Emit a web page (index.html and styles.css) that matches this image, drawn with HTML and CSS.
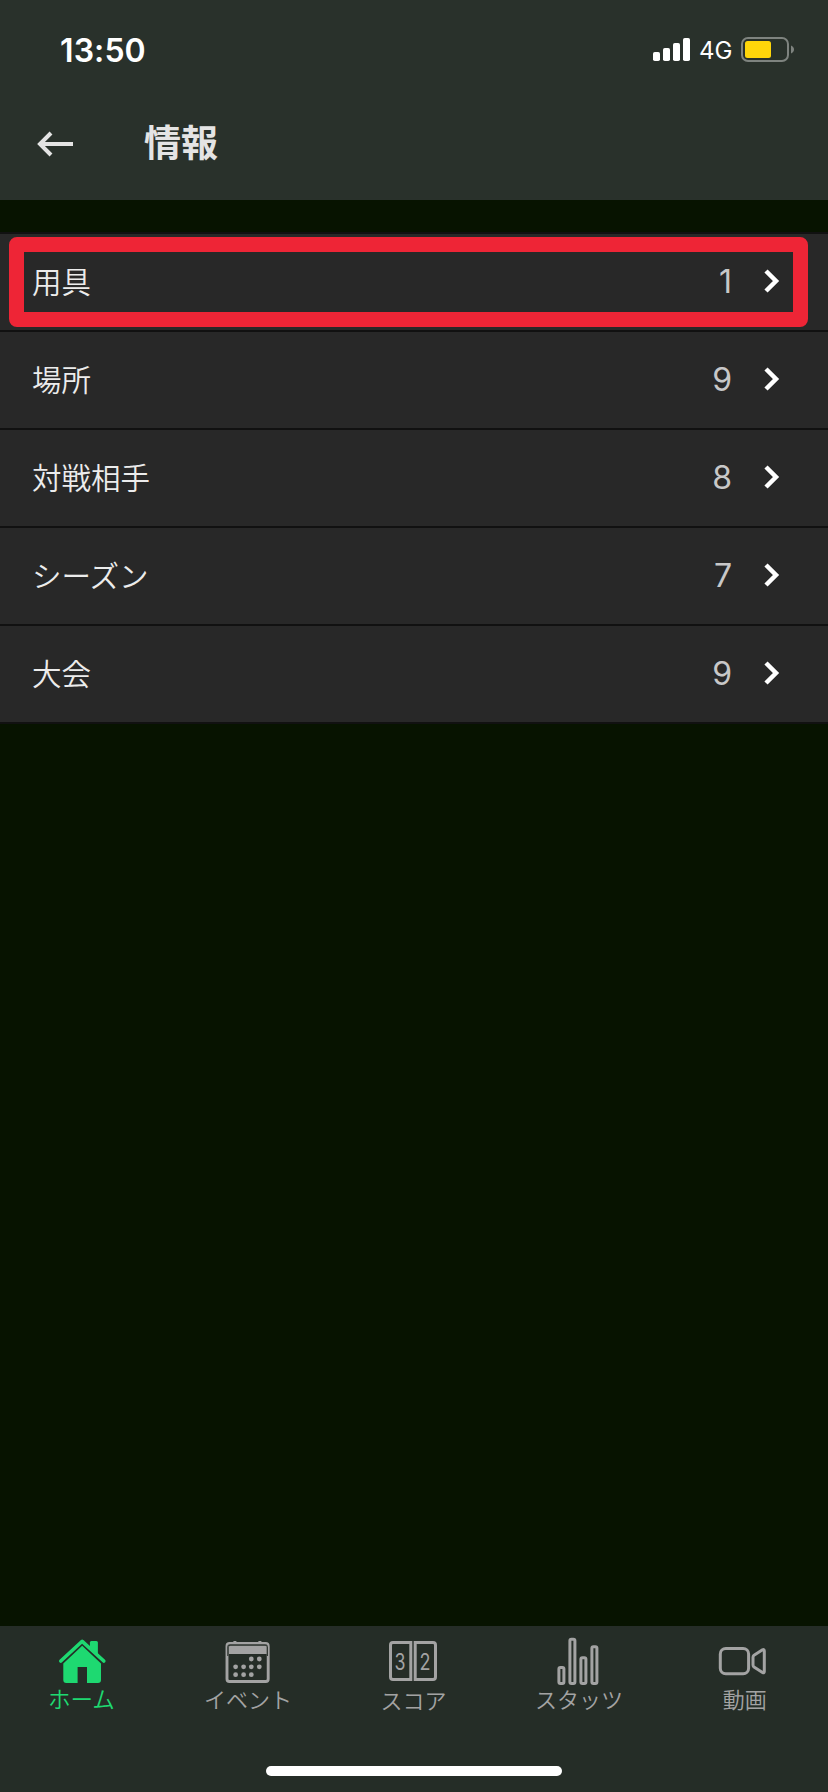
FILE: index.html
```
<!DOCTYPE html>
<html lang="ja">
<head>
    <meta charset="UTF-8">
    <meta name="viewport" content="width=device-width, initial-scale=1.0">
    <title>情報</title>
    <link rel="stylesheet" href="styles.css">
</head>
<body>

    <header>
        <div class="status-bar">
            <span class="time">13:50</span>
            <div class="status-icons">
                <svg class="signal" width="38" height="24" viewBox="0 0 38 24" fill="#fff">
                    <rect x="0" y="14" width="7" height="9" rx="1.8"/>
                    <rect x="10" y="10" width="7" height="13" rx="1.8"/>
                    <rect x="20" y="5" width="7" height="18" rx="1.8"/>
                    <rect x="30" y="0" width="7" height="23" rx="1.8"/>
                </svg>
                <span class="network">4G</span>
                <svg class="battery" width="54" height="26" viewBox="0 0 54 26">
                    <rect x="1" y="1" width="46" height="23" rx="6" fill="none" stroke="#7e837f" stroke-width="2"/>
                    <rect x="4" y="4" width="26" height="17" rx="2.5" fill="#ffd60a"/>
                    <path d="M50 8.5c2 .8 3 2.300 3 4s-1 3.200-3 4z" fill="#7e837f"/>
                </svg>
            </div>
        </div>
        <div class="title-bar">
            <a href="#" class="back">
                <svg width="38" height="26" viewBox="0 0 38 26" fill="none" stroke="#e4e4e4" stroke-width="4">
                    <path d="M37 13H4M15 2L4 13L15 24"/>
                </svg>
            </a>
            <h1>情報</h1>
        </div>
    </header>

    <main>
        <ul class="list">
            <li class="selected">
                <span class="name">用具</span><span class="count">1</span>
                <svg class="arrow" width="16" height="24" viewBox="0 0 16 24"><path d="M2 2L12 12L2 22"/></svg>
            </li>
            <li>
                <span class="name">場所</span><span class="count">9</span>
                <svg class="arrow" width="16" height="24" viewBox="0 0 16 24"><path d="M2 2L12 12L2 22"/></svg>
            </li>
            <li>
                <span class="name">対戦相手</span><span class="count">8</span>
                <svg class="arrow" width="16" height="24" viewBox="0 0 16 24"><path d="M2 2L12 12L2 22"/></svg>
            </li>
            <li>
                <span class="name">シーズン</span><span class="count">7</span>
                <svg class="arrow" width="16" height="24" viewBox="0 0 16 24"><path d="M2 2L12 12L2 22"/></svg>
            </li>
            <li>
                <span class="name">大会</span><span class="count">9</span>
                <svg class="arrow" width="16" height="24" viewBox="0 0 16 24"><path d="M2 2L12 12L2 22"/></svg>
            </li>
        </ul>
    </main>

    <footer>
        <nav>
            <a href="#" class="tab active">
                <svg width="56" height="56" viewBox="0 0 56 56" fill="currentColor">
                    <path d="M34.900 16.500V10.500q0-1.500 1.500-1.500h5q1.500 0 1.500 1.500V23.800z"/>
                    <path d="M5.800 29L27.200 9.300L48.800 29" fill="none" stroke="currentColor" stroke-width="3.600" stroke-linecap="round" stroke-linejoin="round"/>
                    <path d="M27.200 13.700L46 31.500V48q0 3-3 3H32V35H22.600V51H11.300q-3 0-3-3V31.500z"/>
                </svg>
                <span>ホーム</span>
            </a>
            <a href="#" class="tab">
                <svg width="56" height="56" viewBox="0 0 56 56" fill="currentColor">
                    <rect x="7" y="11.500" width="41.200" height="38" rx="2.500" fill="none" stroke="currentColor" stroke-width="2.900"/>
                    <rect x="13.400" y="9" width="3" height="3"/>
                    <rect x="38.400" y="9" width="3" height="3"/>
                    <path d="M7.800 24V14.500q0-1.700 1.700-1.700h36.200q1.700 0 1.700 1.700V24" fill="none" stroke="#252d27" stroke-width="1"/>
                    <path d="M9 22V15q0-1.300 1.300-1.300h35q1.300 0 1.300 1.300v7z"/>
                    <circle cx="31.300" cy="27" r="2.400"/><circle cx="39.300" cy="27" r="2.400"/>
                    <circle cx="15.600" cy="34.800" r="2.400"/><circle cx="23.600" cy="34.800" r="2.400"/><circle cx="31.300" cy="34.800" r="2.400"/><circle cx="39.300" cy="34.800" r="2.400"/>
                    <circle cx="15.600" cy="42.700" r="2.400"/><circle cx="23.600" cy="42.700" r="2.400"/><circle cx="31.300" cy="42.700" r="2.400"/>
                </svg>
                <span>イベント</span>
            </a>
            <a href="#" class="tab score">
                <svg width="56" height="56" viewBox="0 0 56 56" fill="none" stroke="currentColor" stroke-width="3">
                    <path d="M24.800 10.500H7q-2.500 0-2.500 2.500V45q0 2.500 2.500 2.500H24.800z"/>
                    <path d="M29.200 10.500H47q2.500 0 2.500 2.500V45q0 2.500-2.500 2.500H29.200z"/>
                    <text x="14" y="37.500" class="digit" textLength="11" lengthAdjust="spacingAndGlyphs">3</text>
                    <text x="39" y="37.500" class="digit" textLength="11" lengthAdjust="spacingAndGlyphs">2</text>
                </svg>
                <span>スコア</span>
            </a>
            <a href="#" class="tab">
                <svg width="56" height="56" viewBox="0 0 56 56" fill="none" stroke="currentColor" stroke-width="3">
                    <rect x="6.900" y="35.500" width="5" height="16" rx="1.500"/>
                    <rect x="17.900" y="7.200" width="5" height="44.300" rx="1.500"/>
                    <rect x="28.900" y="25.800" width="5" height="25.700" rx="1.500"/>
                    <rect x="39.900" y="14.800" width="5" height="36.700" rx="1.500"/>
                </svg>
                <span>スタッツ</span>
            </a>
            <a href="#" class="tab">
                <svg width="56" height="56" viewBox="0 0 56 56" fill="none" stroke="currentColor" stroke-width="3" stroke-linejoin="round">
                    <rect x="3.300" y="16.500" width="28.300" height="25.300" rx="5.500"/>
                    <path d="M36 25.200Q36 24 37 23.200L45.500 17.800Q47.300 17 47.300 19V39.500Q47.300 41.500 45.500 40.500L37 35Q36 34.200 36 33z"/>
                </svg>
                <span>動画</span>
            </a>
        </nav>
        <div class="home-indicator"></div>
    </footer>

</body>
</html>
```
FILE: styles.css
```
* {
    margin: 0;
    padding: 0;
    box-sizing: border-box;
}
body {
    display: flex;
    flex-direction: column;
    height: 1792px;
    overflow: hidden;
    font-family: Inter, "Noto Sans CJK JP", sans-serif;
    background-color: #071300;
    color: #ececec;
}
a {
    color: inherit;
    text-decoration: none;
}
svg {
    display: block;
    flex: none;
}
header {
    height: 200px;
    background-color: #29312b;
}
.status-bar {
    display: flex;
    justify-content: space-between;
    height: 88px;
    padding: 30px 33px 0 60px;
    color: #fff;
}
.time {
    font-size: 32px;
    font-weight: 600;
    line-height: 41px;
    letter-spacing: 0.1px;
}
.status-icons {
    display: flex;
    align-items: flex-start;
    padding-top: 7px;
}
.signal {
    margin-top: 1px;
}
.network {
    width: 50px;
    padding-left: 8px;
    font-size: 24px;
    line-height: 27px;
}
.title-bar {
    display: flex;
    align-items: center;
    height: 112px;
    padding-left: 36px;
}
.title-bar h1 {
    margin-left: 70px;
    padding-bottom: 6px;
    font-family: "Noto Sans CJK JP", sans-serif;
    font-size: 37px;
    font-weight: 700;
    line-height: 50px;
    color: #e4e4e4;
}
main {
    flex: 1;
    padding-top: 32px;
}
.list {
    list-style: none;
    border-top: 2px solid #111;
}
.list li {
    display: flex;
    align-items: center;
    position: relative;
    height: 98px;
    padding: 0 48px 0 32px;
    border-bottom: 2px solid #111;
    background-color: #282828;
}
/* red frame over the selected row */
.list .selected::after {
    content: "";
    position: absolute;
    top: 3px;
    left: 9px;
    right: 20px;
    bottom: 3px;
    border: 15px solid #ee2536;
    border-radius: 8px;
}
.name {
    flex: 1;
    padding-bottom: 5px;
    font-family: "Noto Sans CJK JP", sans-serif;
    font-size: 29.5px;
    font-weight: 350;
}
.count {
    margin-right: 32px;
    padding-bottom: 1px;
    font-size: 32px;
    font-weight: 400;
    color: #c8c8c8;
}
.arrow {
    margin-bottom: 3px;
    fill: none;
    stroke: #fff;
    stroke-width: 4.5;
}
footer {
    height: 166px;
    padding-top: 6px;
    background-color: #252d27;
}
nav {
    display: flex;
    height: 134px;
}
.tab {
    display: flex;
    flex: 1;
    flex-direction: column;
    align-items: center;
    color: #a3a3a3;
}
.tab span {
    margin-top: -6px;
    padding-right: 1px;
    font-family: "Noto Sans CJK JP", sans-serif;
    font-size: 22px;
    font-weight: 350;
    line-height: 32px;
}
.tab.score span {
    margin-top: -5px;
}
.tab.active {
    color: #1ed971;
}
.tab.active span {
    padding-right: 3px;
    font-size: 22.5px;
}
.digit {
    font-family: Inter, sans-serif;
    font-size: 23px;
    font-weight: 400;
    text-anchor: middle;
    fill: currentColor;
    stroke: none;
}
.home-indicator {
    width: 296px;
    height: 10px;
    margin: 0 auto;
    border-radius: 5px;
    background-color: #fff;
}
```
